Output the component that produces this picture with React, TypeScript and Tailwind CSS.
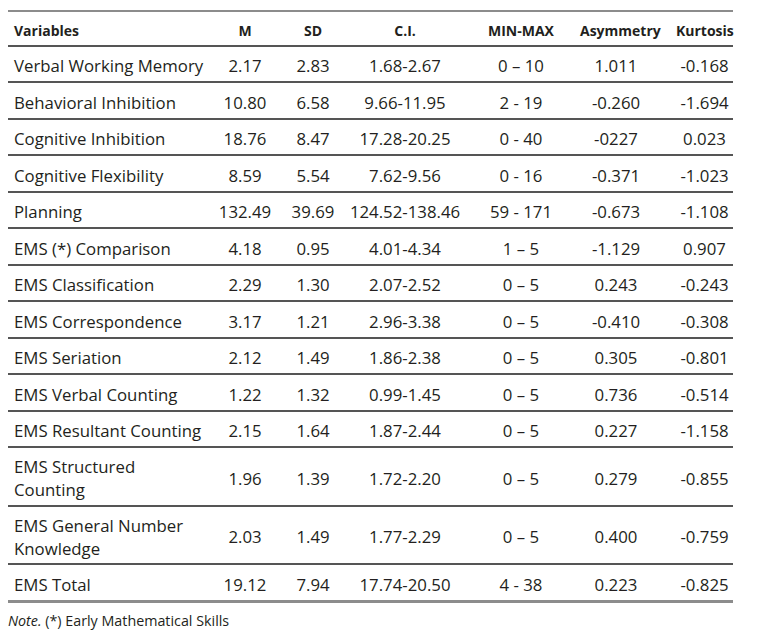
import React from "react";

type Row = { v: React.ReactNode; m: string; sd: string; ci: string; mm: string; a: string; k: string; tall?: boolean };

const rows: Row[] = [
  { v: "Verbal Working Memory", m: "2.17", sd: "2.83", ci: "1.68-2.67", mm: "0 – 10", a: "1.011", k: "-0.168" },
  { v: "Behavioral Inhibition", m: "10.80", sd: "6.58", ci: "9.66-11.95", mm: "2 - 19", a: "-0.260", k: "-1.694" },
  { v: "Cognitive Inhibition", m: "18.76", sd: "8.47", ci: "17.28-20.25", mm: "0 - 40", a: "-0227", k: "0.023" },
  { v: "Cognitive Flexibility", m: "8.59", sd: "5.54", ci: "7.62-9.56", mm: "0 - 16", a: "-0.371", k: "-1.023" },
  { v: "Planning", m: "132.49", sd: "39.69", ci: "124.52-138.46", mm: "59 - 171", a: "-0.673", k: "-1.108" },
  { v: "EMS (*) Comparison", m: "4.18", sd: "0.95", ci: "4.01-4.34", mm: "1 – 5", a: "-1.129", k: "0.907" },
  { v: "EMS Classification", m: "2.29", sd: "1.30", ci: "2.07-2.52", mm: "0 – 5", a: "0.243", k: "-0.243" },
  { v: "EMS Correspondence", m: "3.17", sd: "1.21", ci: "2.96-3.38", mm: "0 – 5", a: "-0.410", k: "-0.308" },
  { v: "EMS Seriation", m: "2.12", sd: "1.49", ci: "1.86-2.38", mm: "0 – 5", a: "0.305", k: "-0.801" },
  { v: "EMS Verbal Counting", m: "1.22", sd: "1.32", ci: "0.99-1.45", mm: "0 – 5", a: "0.736", k: "-0.514" },
  { v: "EMS Resultant Counting", m: "2.15", sd: "1.64", ci: "1.87-2.44", mm: "0 – 5", a: "0.227", k: "-1.158" },
  { v: <>EMS Structured<br />Counting</>, m: "1.96", sd: "1.39", ci: "1.72-2.20", mm: "0 – 5", a: "0.279", k: "-0.855", tall: true },
  { v: <>EMS General Number<br />Knowledge</>, m: "2.03", sd: "1.49", ci: "1.77-2.29", mm: "0 – 5", a: "0.400", k: "-0.759", tall: true },
];

const grid = "grid grid-cols-[204px_66px_70px_114px_118px_72px_81px] items-center";

export default function App() {
  return (
    <div className="w-[761px] h-[638px] bg-white text-[#231f20] pt-[10px] pl-[8px]" style={{ fontFamily: '"Open Sans", "Noto Sans", sans-serif' }}>
      <div className="w-[725px] text-[16.8px] leading-[23px]">
        <div className={`${grid} h-[36.5px] pt-[4px] border-t-2 border-b-2 border-t-[#8c8c8c] border-b-[#555] font-bold text-[14px]`}>
          <div className="pl-[6px]">Variables</div>
          <div className="text-center">M</div>
          <div className="text-center">SD</div>
          <div className="text-center">C.I.</div>
          <div className="text-center whitespace-nowrap">MIN-MAX</div>
          <div className="text-center whitespace-nowrap">Asymmetry</div>
          <div className="text-center pl-[24px]">Kurtosis</div>
        </div>
        {rows.map((r, i) => (
          <div key={i} className={`${grid} ${r.tall ? "h-[58.5px]" : "h-[36.5px]"} pt-[4px] border-b-2 border-[#555]`}>
            <div className="pl-[6px] whitespace-nowrap">{r.v}</div>
            <div className="text-center">{r.m}</div>
            <div className="text-center">{r.sd}</div>
            <div className="text-center whitespace-nowrap">{r.ci}</div>
            <div className="text-center whitespace-nowrap">{r.mm}</div>
            <div className="text-center">{r.a}</div>
            <div className="text-center pl-[24px]">{r.k}</div>
          </div>
        ))}
        <div className={`${grid} h-[37.5px] pt-[4px] border-b-[3px] border-[#8c8c8c]`}>
          <div className="pl-[6px]">EMS Total</div>
          <div className="text-center">19.12</div>
          <div className="text-center">7.94</div>
          <div className="text-center">17.74-20.50</div>
          <div className="text-center">4 - 38</div>
          <div className="text-center">0.223</div>
          <div className="text-center pl-[24px]">-0.825</div>
        </div>
        <div className="text-[14.3px] leading-[20px] mt-[8px]">
          <span className="italic">Note.</span> (*) Early Mathematical Skills
        </div>
      </div>
    </div>
  );
}
